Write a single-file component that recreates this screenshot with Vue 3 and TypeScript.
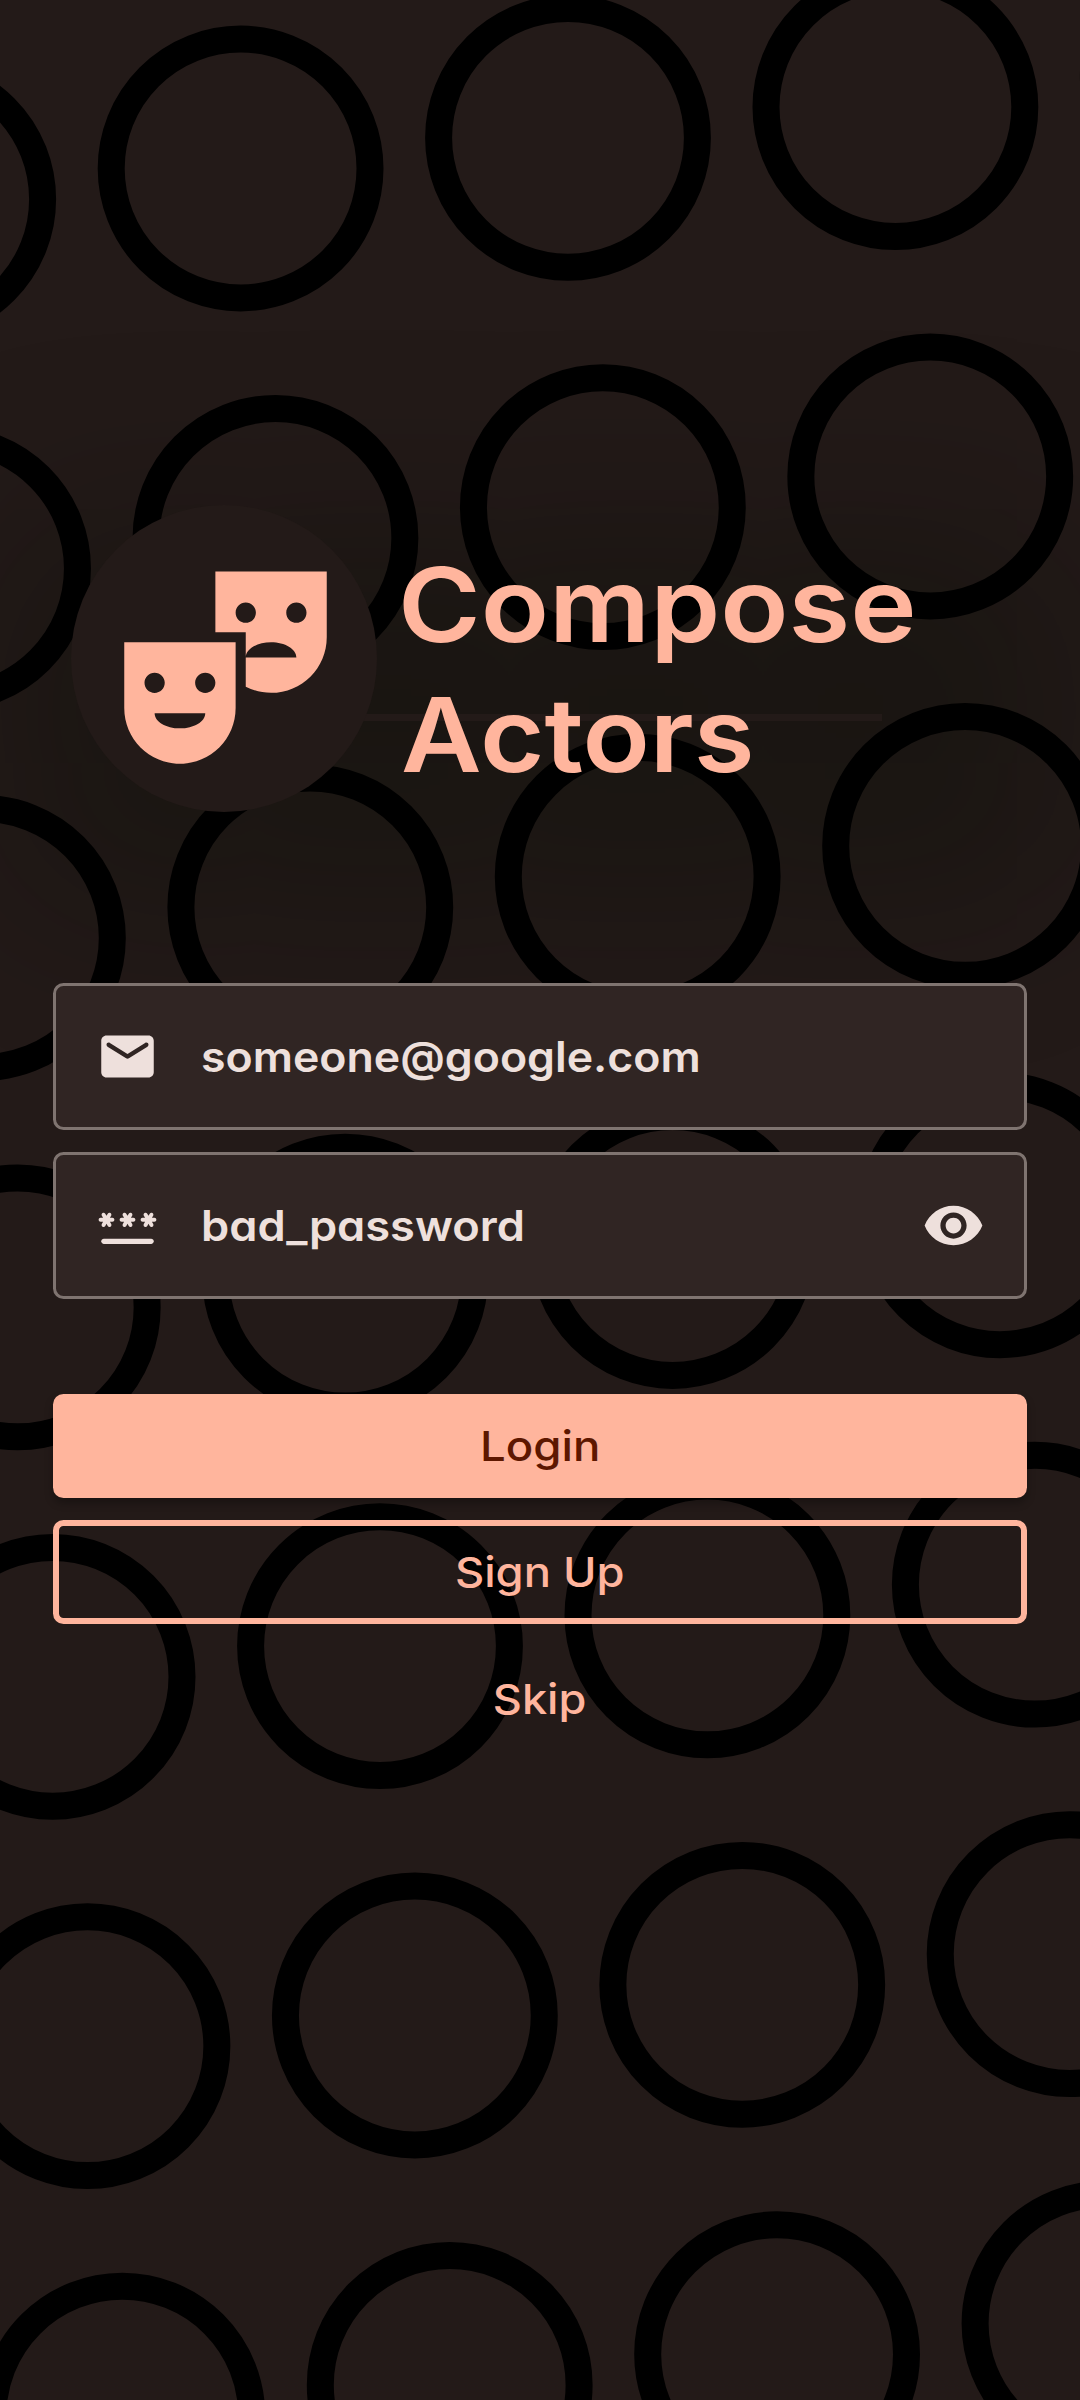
<script setup lang="ts">
interface Ring {
  x: number
  y: number
}

const rings: Ring[] = []
for (let row = -1; row <= 7; row++) {
  for (let col = -4; col <= 4; col++) {
    rings.push({
      x: 240.6 + col * 327.4 + row * 34.85,
      y: 168.5 - col * 30.7 + row * 369.4,
    })
  }
}

const email: string = 'someone@google.com'
const password: string = 'bad_password'
const asteriskOffsets: number[] = [0, 8, 16]
</script>

<template>
  <main class="screen">
    <div class="glow"></div>
    <svg class="pattern" viewBox="0 0 1080 2400" aria-hidden="true">
      <circle v-for="(ring, i) in rings" :key="i" :cx="ring.x" :cy="ring.y" r="129.4" />
    </svg>

    <header class="brand">
      <div class="badge">
        <svg class="masks" viewBox="0 0 24 24">
          <path
            fill-rule="evenodd"
            d="M2 16.5C2 19.54 4.46 22 7.5 22s5.5-2.46 5.5-5.5V10H2v6.5zM7.5 18.5C6.12 18.5 5 17.83 5 17h5c0 .83-1.12 1.5-2.5 1.5zM10 13c.55 0 1 .45 1 1s-.45 1-1 1-1-.45-1-1 .45-1 1-1zM5 13c.55 0 1 .45 1 1s-.45 1-1 1-1-.45-1-1 .45-1 1-1z"
          />
          <path
            fill-rule="evenodd"
            d="M11 3v6h3v2.5c0-.83 1.12-1.5 2.5-1.5s2.5.67 2.5 1.5h-5v2.89c.75.38 1.6.61 2.5.61 3.04 0 5.5-2.46 5.5-5.5V3H11zM14 8.08c-.55 0-1-.45-1-1s.45-1 1-1 1 .45 1 1-.45 1-1 1zM19 8.08c-.55 0-1-.45-1-1s.45-1 1-1 1 .45 1 1-.45 1-1 1z"
          />
        </svg>
      </div>
      <h1 class="title">
        <span class="fit compose">Compose</span>
        <span class="fit actors">Actors</span>
      </h1>
    </header>

    <form class="form" @submit.prevent>
      <div class="field">
        <svg class="icon" viewBox="0 0 24 24">
          <path
            d="M20 4H4c-1.1 0-2 .9-2 2v12c0 1.1.9 2 2 2h16c1.1 0 2-.9 2-2V6c0-1.1-.9-2-2-2zm-.4 4.25l-7.07 4.42c-.32.2-.74.2-1.06 0L4.4 8.25c-.25-.16-.4-.43-.4-.72 0-.67.73-1.07 1.3-.72L12 11l6.7-4.19c.57-.35 1.3.05 1.3.72 0 .29-.15.56-.4.72z"
          />
        </svg>
        <span class="value"><span class="fit email">{{ email }}</span></span>
      </div>
      <div class="field">
        <svg class="icon" viewBox="0 0 24 24">
          <path d="M3 17h18c.55 0 1 .45 1 1s-.45 1-1 1H3c-.55 0-1-.45-1-1s.45-1 1-1z" />
          <path
            v-for="dx in asteriskOffsets"
            :key="dx"
            :transform="`translate(${dx} 0)`"
            d="M2.5 12.43c.36.21.82.08 1.03-.28l.47-.82.48.83c.21.36.67.48 1.03.28.36-.21.48-.66.28-1.02l-.49-.84h.95c.41 0 .75-.34.75-.75s-.34-.75-.75-.75H5.3l.47-.82c.21-.36.09-.82-.27-1.03-.36-.21-.82-.09-1.03.27L4 8.3l-.47-.8c-.21-.36-.67-.48-1.03-.27-.36.21-.48.67-.27 1.03l.47.82h-.95c-.41-.01-.75.33-.75.74s.34.75.75.75h.95l-.48.83c-.2.36-.08.82.28 1.03z"
          />
        </svg>
        <span class="value"><span class="fit password">{{ password }}</span></span>
        <svg class="icon" viewBox="0 0 24 24">
          <path
            d="M12 4.5C7 4.5 2.73 7.61 1 12c1.73 4.39 6 7.5 11 7.5s9.27-3.11 11-7.5c-1.73-4.39-6-7.5-11-7.5zM12 17c-2.76 0-5-2.24-5-5s2.24-5 5-5 5 2.24 5 5-2.24 5-5 5zm0-8c-1.66 0-3 1.34-3 3s1.34 3 3 3 3-1.34 3-3-1.34-3-3-3z"
          />
        </svg>
      </div>
    </form>

    <nav class="actions">
      <button class="btn filled" type="button"><span class="label login">Login</span></button>
      <button class="btn outlined" type="button"><span class="label signup">Sign Up</span></button>
      <button class="btn text" type="button"><span class="label skip">Skip</span></button>
    </nav>
  </main>
</template>

<style>
body {
  background: #231a18;
}
</style>

<style scoped>
.screen {
  position: relative;
  box-sizing: border-box;
  width: 1080px;
  height: 2400px;
  padding: 505px 53px 0;
  overflow: hidden;
  background: #231a18;
  font-family: Inter, 'Open Sans', sans-serif;
  font-feature-settings: 'cv11' 1;
}

.pattern {
  position: absolute;
  inset: 0;
  width: 1080px;
  height: 2400px;
}

.pattern circle {
  fill: none;
  stroke: #000;
  stroke-width: 27;
}

.glow {
  position: absolute;
  left: 198px;
  top: 714px;
  width: 684px;
  height: 7px;
  box-shadow: 0 0 190px 185px rgba(4, 12, 4, 0.27);
}

.brand {
  position: relative;
  display: flex;
  height: 307px;
  padding-left: 17.7px;
}

.badge {
  position: relative;
  box-sizing: border-box;
  flex: none;
  width: 306px;
  height: 307px;
  padding: 36px 0 0 33.3px;
  border-radius: 50%;
  background: #231a18;
}

.masks {
  display: block;
  width: 243px;
  height: 243px;
  fill: #ffb59d;
}

.title {
  position: relative;
  display: flex;
  flex-direction: column;
  align-items: flex-start;
  margin: 35px 0 0 21px;
  color: #ffb59d;
  font-size: 103px;
  font-weight: 570;
  line-height: 130px;
}

.fit {
  display: inline-block;
  transform-origin: left center;
  white-space: nowrap;
}

.compose {
  transform: scaleX(1.09);
}

.actors {
  margin-left: 3px;
  transform: scaleX(1.075);
}

.form {
  position: relative;
  display: flex;
  flex-direction: column;
  gap: 22px;
  margin-top: 171px;
}

.field {
  box-sizing: border-box;
  display: flex;
  align-items: center;
  height: 147px;
  padding: 0 39.5px;
  border: 3px solid #7f7470;
  border-radius: 10.5px;
  background: #302523;
}

.icon {
  flex: none;
  width: 63px;
  height: 63px;
  fill: #eee0dc;
}

.value {
  flex: 1;
  padding-left: 42px;
  color: #eee0dc;
  font-size: 42px;
  font-weight: 600;
  line-height: 60px;
}

.email {
  transform: scaleX(1.063);
}

.password {
  transform: scaleX(1.076);
}

.actions {
  position: relative;
  display: flex;
  flex-direction: column;
  gap: 22px;
  margin-top: 95px;
}

.btn {
  box-sizing: border-box;
  display: flex;
  align-items: center;
  justify-content: center;
  height: 104px;
  padding: 0;
  border: 0;
  border-radius: 10.5px;
  background: none;
  color: #ffb59d;
  font: inherit;
  font-size: 41px;
  font-weight: 470;
}

.filled {
  background: #ffb59d;
  color: #5d1700;
  box-shadow: 0 5px 9px rgba(0, 0, 0, 0.28);
}

.outlined {
  border: 6px solid #ffb59d;
}

.label {
  display: inline-block;
}

.login {
  transform: scaleX(1.11);
}

.signup {
  transform: scaleX(1.105);
}

.skip {
  margin-top: 2px;
  transform: scaleX(1.1);
}
</style>
